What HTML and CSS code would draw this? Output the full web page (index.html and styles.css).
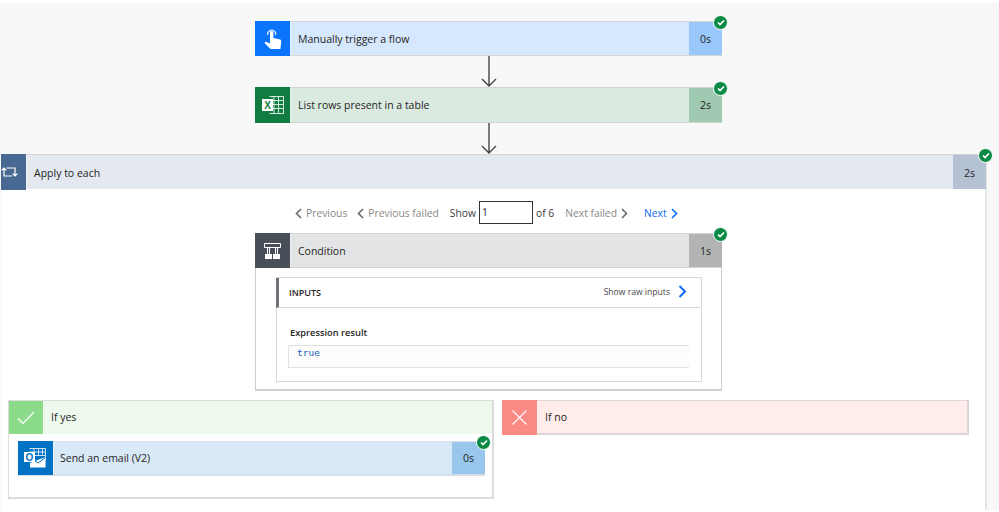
FILE: index.html
```html
<!DOCTYPE html>
<html lang="en">
<head>
    <meta charset="UTF-8">
    <title>Flow run</title>
    <link rel="stylesheet" href="styles.css">
</head>
<body>
<div class="canvas">
    <div class="card card-trigger">
        <div class="card-icon">
            <svg width="20" height="22" viewBox="0 0 20 22"><path fill="#fff" d="M7 9V4.500a1.700 1.700 0 0 1 3.400 0V10l6 1.300c1.300.3 1.900 1 1.800 2.200L17.500 21H7.500L2 15.500c-.9-1 .5-2.300 1.600-1.600L7 15.500z"/><path fill="none" stroke="#fff" stroke-width="1.100" d="M4.700 7a4.100 4.100 0 1 1 8 0"/></svg>
        </div>
        <div class="card-title">Manually trigger a flow</div>
        <div class="card-time">0s</div>
        <span class="check"><svg width="8" height="7" viewBox="0 0 8 7"><path fill="none" stroke="#fff" stroke-width="1.700" d="M1 3.500l2 2 4-4"/></svg></span>
    </div>
    <svg class="arrow" width="16" height="31" viewBox="0 0 16 31"><path fill="none" stroke="#444" stroke-width="1.400" d="M8 0v30M1 23l7 7 7-7"/></svg>
    <div class="card card-excel">
        <div class="card-icon">
            <svg width="22" height="20" viewBox="0 0 22 20"><path fill="none" stroke="#d5e8dc" stroke-width="1" d="M7.500 1.500h14v17h-14M12 1.500v17M16.500 1.500v17M7.500 5.500h14M7.500 9.500h14M7.500 13.500h14"/><rect x="0" y="4" width="11" height="12" fill="#fff"/><text class="excel-x" x="5.500" y="13.500" text-anchor="middle">X</text></svg>
        </div>
        <div class="card-title">List rows present in a table</div>
        <div class="card-time">2s</div>
        <span class="check"><svg width="8" height="7" viewBox="0 0 8 7"><path fill="none" stroke="#fff" stroke-width="1.700" d="M1 3.500l2 2 4-4"/></svg></span>
    </div>
    <svg class="arrow" width="16" height="31" viewBox="0 0 16 31"><path fill="none" stroke="#444" stroke-width="1.400" d="M8 0v30M1 23l7 7 7-7"/></svg>

    <div class="loop">
        <div class="card card-loop">
            <div class="card-icon">
                <svg width="17" height="14" viewBox="0 0 17 14"><path fill="none" stroke="#fff" stroke-width="1.200" d="M3 3v8h8M14 11V3H5.500M.6 5.400L3 3l2.400 2.400M11.600 8.600L14 11l2.400-2.400"/></svg>
            </div>
            <div class="card-title">Apply to each</div>
            <div class="card-time">2s</div>
            <span class="check"><svg width="8" height="7" viewBox="0 0 8 7"><path fill="none" stroke="#fff" stroke-width="1.700" d="M1 3.500l2 2 4-4"/></svg></span>
        </div>

        <div class="pager">
            <span class="pager-link"><svg class="chev" width="7" height="11" viewBox="0 0 7 11"><path d="M6 1L1.500 5.500 6 10"/></svg>Previous</span>
            <span class="pager-link pager-prevfail"><svg class="chev" width="7" height="11" viewBox="0 0 7 11"><path d="M6 1L1.500 5.500 6 10"/></svg>Previous failed</span>
            <span class="pager-show">Show</span>
            <span class="pager-input">1</span>
            <span class="pager-of">of 6</span>
            <span class="pager-link pager-nextfail">Next failed<svg class="chev" width="7" height="11" viewBox="0 0 7 11"><path d="M1 1l4.500 4.500L1 10"/></svg></span>
            <span class="pager-link pager-next">Next<svg class="chev" width="7" height="11" viewBox="0 0 7 11"><path d="M1 1l4.500 4.500L1 10"/></svg></span>
        </div>

        <div class="condition">
            <div class="card card-condition">
                <div class="card-icon">
                    <svg width="17" height="16" viewBox="0 0 17 16"><path fill="none" stroke="#fff" stroke-width="1" d="M.5.500h16v4H.5zM3.500 4.500v7M5.500 4.500v7M11.500 4.500v7M13.500 4.500v7"/><path fill="#fff" d="M1 11h7v5H1zM9 11h7v5H9z"/></svg>
                </div>
                <div class="card-title">Condition</div>
                <div class="card-time">1s</div>
                <span class="check"><svg width="8" height="7" viewBox="0 0 8 7"><path fill="none" stroke="#fff" stroke-width="1.700" d="M1 3.500l2 2 4-4"/></svg></span>
            </div>
            <div class="inputs">
                <div class="inputs-head">
                    <span class="inputs-label">INPUTS</span>
                    <span class="inputs-raw">Show raw inputs</span>
                    <svg class="raw-chev" width="9" height="13" viewBox="0 0 9 13"><path d="M1.500 1l5.500 5.500L1.500 12"/></svg>
                </div>
                <div class="inputs-body">
                    <div class="expr-label">Expression result</div>
                    <div class="expr-value">true</div>
                </div>
            </div>
        </div>

        <div class="branches">
            <div class="branch branch-yes">
                <div class="card card-yes">
                    <div class="card-icon">
                        <svg width="18" height="14" viewBox="0 0 18 14"><path fill="none" stroke="#fff" stroke-width="1.200" d="M1 7.500L6 12.500 17 1"/></svg>
                    </div>
                    <div class="card-title">If yes</div>
                </div>
                <div class="branch-body">
                    <div class="card card-email">
                        <div class="card-icon">
                            <svg class="outlook" width="22" height="20" viewBox="0 0 22 20"><path fill="none" stroke="#cfe4f6" stroke-width="1" d="M5.500.500h16v12M10 .5v9M14.500.5v7M18.500.5v6M5.500 4h16M5.500 7.500h16"/><path fill="#fff" d="M6 15l15.500-6v10.500H6z"/><path fill="none" stroke="#0072c6" stroke-width="1" d="M7 10l7 5 7.500-5.500"/><rect x="0" y="4" width="11" height="10" fill="#fff"/><text class="outlook-o" x="5.500" y="12.800" text-anchor="middle">O</text></svg>
                        </div>
                        <div class="card-title">Send an email (V2)</div>
                        <div class="card-time">0s</div>
                        <span class="check"><svg width="8" height="7" viewBox="0 0 8 7"><path fill="none" stroke="#fff" stroke-width="1.700" d="M1 3.500l2 2 4-4"/></svg></span>
                    </div>
                </div>
            </div>
            <div class="branch branch-no">
                <div class="card card-no">
                    <div class="card-icon">
                        <svg width="15" height="15" viewBox="0 0 15 15"><path fill="none" stroke="#fff" stroke-width="1.100" d="M.5.500l14 14M14.500.500l-14 14"/></svg>
                    </div>
                    <div class="card-title">If no</div>
                </div>
            </div>
        </div>
    </div>
</div>
</body>
</html>
```
FILE: styles.css
```css
*{
    margin: 0;
    padding: 0;
    box-sizing: border-box;
}
html,body{
    height: 512px;
    overflow: hidden;
    background-color: #ffffff;
}
body{
    font-family: "Open Sans", "Noto Sans", sans-serif;
    font-size: 10.500px;
    color: #252423;
}
.canvas{
    height: 507px;
    margin-top: 3px;
    padding-top: 18px;
    padding-left: 1px;
    background-color: #f8f8f8;
    display: flex;
    flex-direction: column;
    align-items: flex-start;
}
.arrow{
    display: block;
    margin-left: 480px;
    flex: none;
}
.card{
    width: 467px;
    height: 35px;
    flex: none;
    display: flex;
    position: relative;
    border-top: 1px solid #d4d4d4;
    border-bottom: 1px solid #d4d4d4;
    margin-left: 254px;
}
.card-icon{
    width: 35px;
    margin-top: -1px;
    margin-bottom: -1px;
    display: flex;
    align-items: center;
    justify-content: center;
    flex: none;
}
.card-title{
    flex: 1;
    padding-left: 7px;
    line-height: 35px;
    border-left: 1px solid rgba(255,255,255,0.4);
}
.card-time{
    width: 33px;
    text-align: center;
    line-height: 35px;
    flex: none;
}
.check{
    position: absolute;
    right: -6px;
    top: -7px;
    width: 13px;
    height: 13px;
    border-radius: 50%;
    background-color: #0b8a45;
    border: 1px solid #ffffff;
    box-sizing: content-box;
    display: flex;
    align-items: center;
    justify-content: center;
}
.card-trigger .card-icon{ background-color: #0a75fb; }
.card-trigger .card-title{ background-color: #d6e8fe; }
.card-trigger .card-time{ background-color: #9ac7fc; }
.card-excel{ height: 36px; }
.card-excel .card-icon{ background-color: #107c41; }
.card-excel .card-title{ background-color: #dbeae0; }
.card-excel .card-time{ background-color: #9fc9b0; }
.excel-x{
    font-family: "Liberation Sans", sans-serif;
    font-size: 10px;
    font-weight: bold;
    fill: #107c41;
}
.outlook{
    margin-left: -2px;
}
.outlook-o{
    font-family: "Liberation Sans", sans-serif;
    font-size: 10px;
    font-weight: bold;
    fill: #0072c6;
}
.loop{
    width: 986px;
    flex: 1;
    background-color: #ffffff;
    border-right: 2px solid #e4e4e4;
}
.card-loop{
    width: 985px;
    margin-left: 0;
    border-bottom: 0;
}
.card-loop .card-icon{
    width: 25px;
    background-color: #486991;
    justify-content: flex-start;
}
.card-loop .card-title{ background-color: #e4e8f0; line-height: 36px; }
.card-loop .card-time{ background-color: #b5c2d3; line-height: 36px; }
.card-loop .check{ right: -7px; }
.pager{
    height: 44px;
    display: flex;
    align-items: center;
    padding-left: 294px;
    padding-top: 4px;
    font-size: 10.300px;
    color: #8a8886;
}
.pager-link{
    display: flex;
    align-items: center;
    gap: 4px;
    margin-right: 10px;
}
.pager-prevfail{ margin-right: 11px; }
.chev{
    fill: none;
    stroke: #6b6b6b;
    stroke-width: 1.600;
}
.pager-show{
    color: #3b3a39;
    margin-right: 3px;
}
.pager-input{
    width: 54px;
    height: 23px;
    margin-top: -2px;
    line-height: 21px;
    padding-left: 2px;
    border: 1px solid #333333;
    color: #252423;
}
.pager-of{
    color: #3b3a39;
    margin-left: 3px;
    margin-right: 11px;
}
.pager-nextfail{ margin-right: 16px; }
.pager-next{ color: #0a6cf5; margin-right: 0; }
.pager-next .chev{ stroke: #0a6cf5; }
.condition{
    width: 467px;
    height: 158px;
    margin-left: 254px;
    border-left: 1px solid #cfcfcf;
    border-right: 1px solid #cfcfcf;
    border-bottom: 2px solid #cfcfcf;
    padding-bottom: 8px;
}
.card-condition{
    margin-left: -1px;
    background-color: #e3e4e6;
}
.card-condition .card-icon{ background-color: #484f58; }
.card-condition .card-title{ background-color: #e3e4e6; }
.card-condition .card-time{ background-color: #b1b3b5; }
.inputs{
    width: 426px;
    height: 105px;
    margin-top: 9px;
    margin-left: 20px;
    border: 1px solid #d8d8d8;
}
.inputs-head{
    height: 30px;
    display: flex;
    align-items: center;
    border-left: 3px solid #6f7276;
    margin-left: -1px;
    border-bottom: 1px solid #d8d8d8;
    padding-left: 10px;
    padding-right: 14px;
}
.inputs-label{
    flex: 1;
    font-size: 9px;
    font-weight: 600;
}
.inputs-raw{
    font-size: 8.600px;
    color: #484644;
    margin-right: 8px;
    margin-top: -2px;
}
.raw-chev{
    fill: none;
    stroke: #0a6cf5;
    stroke-width: 2;
    margin-top: -3px;
}
.inputs-body{
    padding: 18px 12px 0 11px;
}
.expr-label{
    font-size: 9.300px;
    font-weight: 600;
    line-height: 14px;
    padding-left: 2px;
}
.expr-value{
    height: 23px;
    margin-top: 5px;
    padding-left: 8px;
    border: 1px solid #e2e2e2;
    border-right: 0;
    font-family: "DejaVu Sans Mono", monospace;
    font-size: 9.500px;
    line-height: 14px;
    color: #1f5fbf;
    background-color: #fdfdfb;
}
.branches{
    display: flex;
    gap: 8px;
    margin-top: 9px;
    padding-left: 7px;
    align-items: flex-start;
}
.branch-yes{
    width: 486px;
    height: 99px;
    border: 1px solid #dcdcdc;
    border-width: 1px 2px 2px 1px;
}
.card-yes{
    width: 483px;
    margin-left: 0;
    border: 0;
    height: 33px;
}
.card-yes .card-icon{
    width: 34px;
    margin: 0;
    background-color: #8bdb8b;
}
.card-yes .card-title{ background-color: #ecf9ec; line-height: 33px; }
.branch-body{
    padding: 7px 0 0 9px;
}
.card-email{
    margin-left: 0;
    height: 35px;
    border-bottom: 2px solid #d6dfe8;
    border-top: 1px solid #dfe3e8;
}
.card-email .card-icon{ background-color: #0072c6; }
.card-email .card-title{ background-color: #d8e9f8; line-height: 32px; padding-left: 6px; }
.card-email .card-time{ background-color: #98c6ec; line-height: 32px; }
.branch-no{
    width: 467px;
    height: 35px;
}
.card-no{
    margin-left: 0;
    border: 1px solid #dcd6d6;
    border-width: 1px 2px 2px 0;
}
.card-no .card-icon{ width: 35px; background-color: #fb8a84; margin-bottom: -2px; }
.card-no .card-title{ background-color: #ffeceb; line-height: 32px; }
```
